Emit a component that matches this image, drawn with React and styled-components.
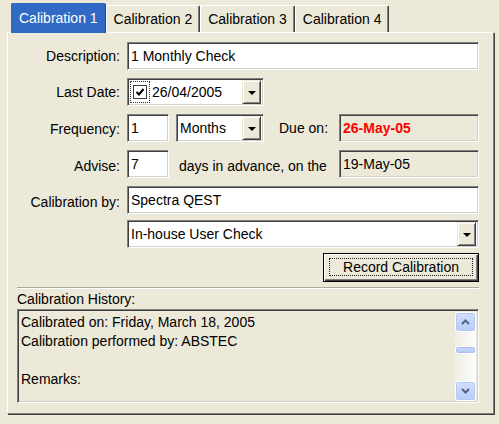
import styled, { createGlobalStyle } from "styled-components";

const GlobalStyle = createGlobalStyle`
  html, body {
    margin: 0;
    padding: 0;
    background: #ECE9D8;
  }
  body {
    font-family: "Liberation Sans", Arial, sans-serif;
    font-size: 14px;
    color: #000;
  }
`;

const Window = styled.div`
  width: 499px;
  height: 424px;
  box-sizing: border-box;
  padding-left: 7px;
  background: #ECE9D8;
`;

const TabStrip = styled.div`
  height: 32px;
  display: flex;
  align-items: flex-end;
  padding-left: 4px;
  position: relative;
  z-index: 1;
`;

const Tab = styled.div`
  box-sizing: border-box;
  height: ${(p) => (p.$active ? "30px" : "27px")};
  margin-bottom: ${(p) => (p.$active ? "-1px" : "0")};
  padding: 0 7px ${(p) => (p.$active ? "1px" : "0")};
  display: flex;
  align-items: center;
  white-space: nowrap;
  border-radius: 2px 2px 0 0;
  background: ${(p) => (p.$active ? "#316AC5" : "#ECE9D8")};
  color: ${(p) => (p.$active ? "#fff" : "#000")};
  border-top: 1px solid ${(p) => (p.$active ? "#316AC5" : "#fff")};
  border-left: 1px solid ${(p) => (p.$active ? "#316AC5" : "#fff")};
  border-right: 1px solid #404040;
  box-shadow: ${(p) => (p.$active ? "none" : "inset -1px 0 0 #808080")};
`;

const Panel = styled.div`
  box-sizing: border-box;
  width: 487px;
  height: 382px;
  padding: 9px 14px 0 9px;
  border: 1px solid;
  border-color: #fff #808080 #808080 #fff;
  box-shadow: 1px 1px 0 #404040;
  display: flex;
  flex-direction: column;
`;

const Form = styled.div`
  display: flex;
  flex-direction: column;
  gap: 8px;
`;

const Row = styled.div`
  display: flex;
  align-items: center;
  height: 28px;
  gap: 7px;
  margin-top: ${(p) => p.$top || 0}px;
`;

const Label = styled.div`
  width: 103px;
  flex: none;
  text-align: right;
  white-space: nowrap;
  padding-top: ${(p) => p.$drop || 0}px;
`;

const Caption = styled.div`
  white-space: nowrap;
  margin-left: ${(p) => p.$left || 0}px;
  padding-top: ${(p) => p.$drop || 0}px;
`;

const Field = styled.div`
  box-sizing: border-box;
  height: 28px;
  width: ${(p) => (p.$w ? p.$w + "px" : "auto")};
  flex: ${(p) => (p.$w ? "none" : "1")};
  margin-left: ${(p) => (p.$push ? "auto" : "0")};
  background: ${(p) => (p.$readOnly ? "#ECE9D8" : "#fff")};
  border: 1px solid;
  border-color: #808080 #fff #fff #808080;
  box-shadow: inset 1px 1px 0 #404040, inset -1px -1px 0 #D4D0C8;
  display: flex;
  align-items: center;
  padding: 0 2px 0 3px;
  color: ${(p) => (p.$alert ? "#FF0000" : "#000")};
  font-weight: ${(p) => (p.$alert ? "bold" : "normal")};
  white-space: nowrap;
  overflow: hidden;
`;

const DropButton = styled.div`
  box-sizing: border-box;
  width: 19px;
  height: 24px;
  margin-left: auto;
  flex: none;
  background: #ECE9D8;
  border: 1px solid;
  border-color: #ECE9D8 #404040 #404040 #ECE9D8;
  box-shadow: inset 1px 1px 0 #fff, inset -1px -1px 0 #808080;
  display: flex;
  align-items: center;
  justify-content: center;

  &::after {
    content: "";
    border-left: 4px solid transparent;
    border-right: 4px solid transparent;
    border-top: 4px solid #000;
    margin-top: 1px;
  }
`;

const CheckFocus = styled.span`
  box-sizing: border-box;
  width: 20px;
  height: 22px;
  margin-left: -1px;
  margin-right: 2px;
  border: 1px dotted #333;
  display: flex;
  align-items: center;
  justify-content: center;
  flex: none;
`;

const CheckBox = styled.span`
  box-sizing: border-box;
  width: 14px;
  height: 14px;
  background: #fff;
  border: 1px solid #404040;
  display: flex;
  align-items: center;
  justify-content: center;
`;

const ButtonRow = styled.div`
  display: flex;
  justify-content: flex-end;
  margin-top: 5px;
`;

const DefaultButton = styled.div`
  box-sizing: border-box;
  width: 156px;
  height: 29px;
  border: 1px solid #000;
  background: #ECE9D8;
  box-shadow: inset 1px 1px 0 #fff, inset -1px -1px 0 #404040, inset -2px -2px 0 #808080;
  padding: 4px 5px 5px 5px;
  display: flex;
`;

const FocusRect = styled.span`
  flex: 1;
  border: 1px dotted #222;
  display: flex;
  align-items: center;
  justify-content: center;
  white-space: nowrap;
`;

const Separator = styled.div`
  margin-top: 5px;
  border-top: 1px solid #ACA899;
  border-bottom: 1px solid #fff;
`;

const GroupTitle = styled.div`
  margin-top: 2px;
  line-height: 16px;
`;

const ListBox = styled(Field)`
  flex: none;
  height: 94px;
  margin-top: 2px;
  align-items: stretch;
  padding: 0;
  white-space: normal;
`;

const ListText = styled.div`
  flex: 1;
  padding: 3px 0 0 3px;
  line-height: 19px;
`;

const ScrollBar = styled.div`
  width: 21px;
  margin: 2px 2px 1px 0;
  display: flex;
  flex-direction: column;
  background: linear-gradient(to right, #EEEDE5, #FDFDFA);
`;

const ArrowButton = styled.div`
  box-sizing: border-box;
  height: 20px;
  border: 1px solid #fff;
  border-radius: 3px;
  background: linear-gradient(to bottom, #D3DFFB, #B8CCF8);
  box-shadow: inset 0 0 0 1px #B4C8F6;
  display: flex;
  align-items: center;
  justify-content: center;
`;

const Track = styled.div`
  flex: 1;
  padding-top: 14px;
`;

const Thumb = styled.div`
  height: 6px;
  border: 1px solid #fff;
  border-radius: 3px;
  background: linear-gradient(to bottom, #CADAFC, #B4C8F6);
  box-shadow: inset 0 0 0 1px #A9BEF0;
`;

const Chevron = ({ up }) => (
  <svg width="9" height="6" viewBox="0 0 9 6">
    <path
      d={up ? "M1 5 L4.5 1.5 L8 5" : "M1 1 L4.5 4.5 L8 1"}
      fill="none"
      stroke="#4D6185"
      strokeWidth="2"
    />
  </svg>
);

const tabs = ["Calibration 1", "Calibration 2", "Calibration 3", "Calibration 4"];

export default function App() {
  return (
    <Window>
      <GlobalStyle />
      <TabStrip>
        {tabs.map((t, i) => (
          <Tab key={t} $active={i === 0}>
            {t}
          </Tab>
        ))}
      </TabStrip>
      <Panel>
        <Form>
          <Row>
            <Label>Description:</Label>
            <Field>1 Monthly Check</Field>
          </Row>
          <Row>
            <Label>Last Date:</Label>
            <Field $w={137}>
              <CheckFocus>
                <CheckBox>
                  <svg width="10" height="10" viewBox="0 0 10 10">
                    <path d="M1.5 5 L4 7.5 L8.5 2" fill="none" stroke="#000" strokeWidth="2" />
                  </svg>
                </CheckBox>
              </CheckFocus>
              26/04/2005
              <DropButton />
            </Field>
          </Row>
          <Row>
            <Label $drop={1}>Frequency:</Label>
            <Field $w={42}>1</Field>
            <Field $w={88}>
              Months
              <DropButton />
            </Field>
            <Caption $left={8}>Due on:</Caption>
            <Field $w={140} $push $readOnly $alert>
              26-May-05
            </Field>
          </Row>
          <Row>
            <Label $drop={4}>Advise:</Label>
            <Field $w={42}>7</Field>
            <Caption $left={3} $drop={4}>
              days in advance, on the
            </Caption>
            <Field $w={140} $push $readOnly>
              19-May-05
            </Field>
          </Row>
          <Row>
            <Label $drop={3}>Calibration by:</Label>
            <Field>Spectra QEST</Field>
          </Row>
        </Form>
        <Row $top={6}>
          <Label />
          <Field>
            In-house User Check
            <DropButton />
          </Field>
        </Row>
        <ButtonRow>
          <DefaultButton>
            <FocusRect>Record Calibration</FocusRect>
          </DefaultButton>
        </ButtonRow>
        <Separator />
        <GroupTitle>Calibration History:</GroupTitle>
        <ListBox $readOnly>
          <ListText>
            Calibrated on: Friday, March 18, 2005
            <br />
            Calibration performed by: ABSTEC
            <br />
            <br />
            Remarks:
          </ListText>
          <ScrollBar>
            <ArrowButton>
              <Chevron up />
            </ArrowButton>
            <Track>
              <Thumb />
            </Track>
            <ArrowButton>
              <Chevron />
            </ArrowButton>
          </ScrollBar>
        </ListBox>
      </Panel>
    </Window>
  );
}
